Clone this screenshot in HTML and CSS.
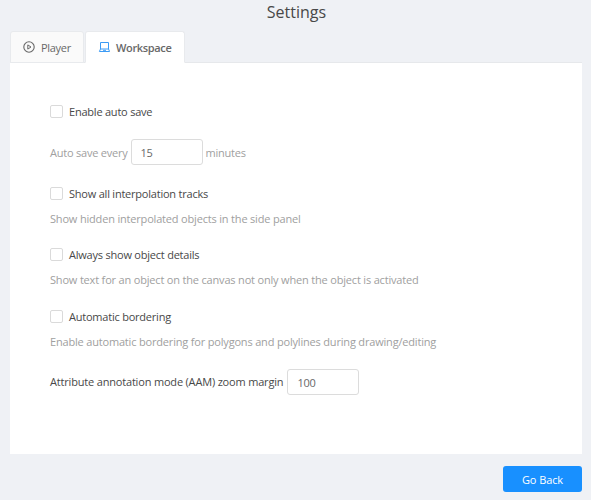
FILE: index.html
```html
<!DOCTYPE html>
<html lang="en">
<head>
<meta charset="utf-8">
<title>Settings</title>
<link rel="stylesheet" href="styles.css">
</head>
<body>
<main class="settings">
  <h1 class="title">Settings</h1>
  <nav class="tabs">
    <div class="tab tab-player">
      <svg class="tab-icon" viewBox="0 0 12 12" fill="none" stroke="currentColor"><circle cx="6" cy="6" r="5.2" stroke-width="1.1"/><path d="M4.8 3.9v4.2L8 6z"/></svg>
      <span>Player</span>
    </div>
    <div class="tab tab-active">
      <svg class="tab-icon" viewBox="0 0 12 12" fill="none" stroke="currentColor"><path d="M2.5 8V1.5h8V8M2.5 8h8l1.1 2.5H1.4zM5 9.3h3"/></svg>
      <span>Workspace</span>
    </div>
  </nav>
  <section class="panel">
    <label class="check"><span class="box"></span><span>Enable auto save</span></label>
    <div class="field field-muted"><span>Auto save every</span><span class="number">15</span><span>minutes</span></div>
    <label class="check"><span class="box"></span><span>Show all interpolation tracks</span></label>
    <p class="hint">Show hidden interpolated objects in the side panel</p>
    <label class="check"><span class="box"></span><span>Always show object details</span></label>
    <p class="hint">Show text for an object on the canvas not only when the object is activated</p>
    <label class="check"><span class="box"></span><span>Automatic bordering</span></label>
    <p class="hint">Enable automatic bordering for polygons and polylines during drawing/editing</p>
    <div class="field field-margin"><span>Attribute annotation mode (AAM) zoom margin</span><span class="number">100</span></div>
  </section>
  <footer class="actions"><button class="back">Go Back</button></footer>
</main>
</body>
</html>
```

FILE: styles.css
```css
* { box-sizing: border-box; }
body {
  margin: 0;
  height: 500px;
  overflow: hidden;
  background: #eff1f5;
  color: #484848;
  font: 11px/17px "Open Sans", "Noto Sans", sans-serif;
  letter-spacing: -0.18px;
}
.settings { padding: 0 9px 0 10px; }
.title {
  margin: 0;
  height: 31px;
  padding-left: 1px;
  font-size: 16px;
  line-height: 24px;
  font-weight: 400;
  letter-spacing: 0;
  text-align: center;
}
.tabs {
  display: flex;
  gap: 1px;
  height: 32px;
  border-bottom: 1px solid #e6e8eb;
}
.tab {
  display: flex;
  align-items: center;
  gap: 6px;
  height: 32px;
  padding: 0 12px;
  border: 1px solid #e8eaed;
  border-radius: 3px 3px 0 0;
  background: #fafafa;
  color: #686868;
}
.tab-player { width: 74px; letter-spacing: -0.3px; }
.tab-active {
  width: 100px;
  background: #fff;
  border-bottom-color: #fff;
  font-weight: 600;
  letter-spacing: -0.35px;
}
.tab-icon { width: 12px; height: 12px; flex: none; }
.tab-active .tab-icon { color: #3c9bf5; }
.panel {
  height: 391px;
  padding: 40px;
  background: #fff;
}
.check {
  display: flex;
  align-items: center;
  gap: 6px;
  height: 17px;
  letter-spacing: -0.22px;
}
.box {
  width: 13px;
  height: 13px;
  border: 1px solid #dadada;
  border-radius: 2px;
}
.hint {
  margin: 8px 0 19.6px;
  height: 17px;
  color: #a0a0a0;
  white-space: nowrap;
}
.field {
  display: flex;
  align-items: center;
  gap: 3px;
  height: 26px;
  white-space: nowrap;
}
.field-muted { margin: 19px 0 19.7px; color: #a0a0a0; letter-spacing: -0.22px; }
.field-margin { gap: 4px; margin-top: -0.5px; }
.number {
  width: 72px;
  height: 26px;
  padding: 0 9px;
  border: 1px solid #dcdcdc;
  border-radius: 3px;
  line-height: 25px;
  color: #686868;
}
.actions { display: flex; justify-content: flex-end; padding-top: 12px; }
.back {
  width: 79px;
  height: 26px;
  padding: 0;
  border: 0;
  border-radius: 3px;
  background: #1890ff;
  color: #fff;
  font: inherit;
  letter-spacing: -0.1px;
}
```
